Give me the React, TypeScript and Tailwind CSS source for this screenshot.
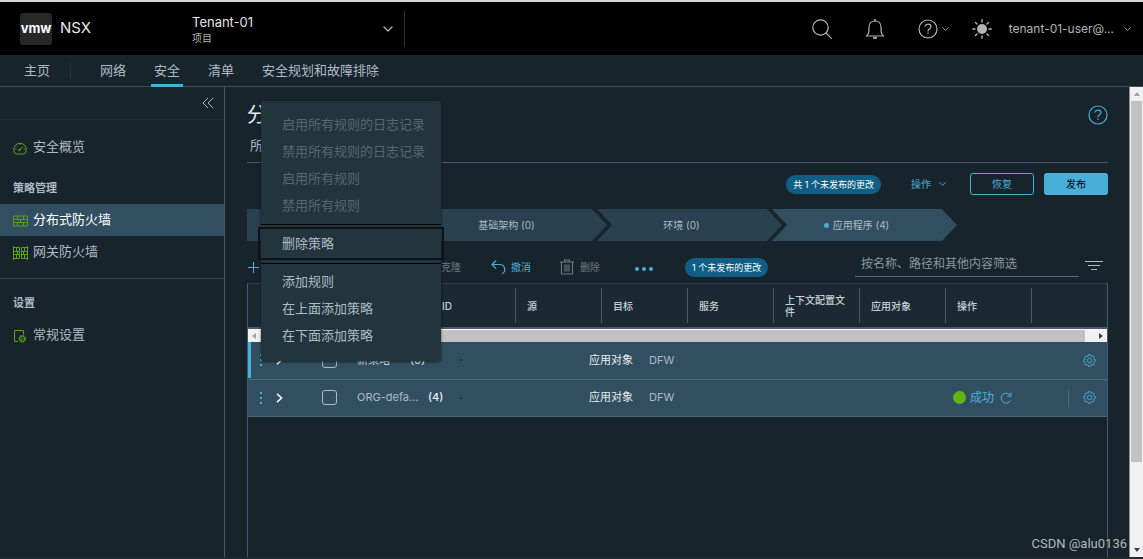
import type { ReactNode } from "react";
import clsx from "clsx";

function ChevronDown({ className }: { className?: string }) {
  return (
    <svg viewBox="0 0 10 6" fill="none" stroke="currentColor" className={className} aria-hidden="true">
      <path d="M1 1l4 4 4-4" strokeWidth="1.3" strokeLinecap="round" strokeLinejoin="round" />
    </svg>
  );
}

function HelpIcon({ className }: { className?: string }) {
  return (
    <svg viewBox="0 0 20 20" fill="none" stroke="currentColor" className={className} aria-hidden="true">
      <circle cx="10" cy="10" r="9" strokeWidth="1.2" />
      <path d="M7 7.2C7.4 5.8 8.6 5.1 10 5.1c1.7 0 3 1 3 2.500 0 2.200-3 2.100-3 4.400" strokeWidth="1.2" strokeLinecap="round" />
      <circle cx="10" cy="14.3" r="0.8" fill="currentColor" stroke="none" />
    </svg>
  );
}

function SearchIcon() {
  return (
    <svg viewBox="0 0 20 20" fill="none" stroke="currentColor" strokeWidth="1.2" className="size-5" aria-hidden="true">
      <circle cx="8.5" cy="8.5" r="7.7" />
      <path d="M14 14l5.400 5.400" strokeLinecap="round" />
    </svg>
  );
}

function BellIcon() {
  return (
    <svg viewBox="0 0 20 20" fill="none" stroke="currentColor" strokeWidth="1.2" className="size-5" aria-hidden="true">
      <path
        d="M1.500 17h17c-1.600-1.400-2.400-2.600-2.400-4.400V8.400C16.100 4.500 13.500 2 10 2S3.900 4.500 3.900 8.400v4.200c0 1.800-.8 3-2.400 4.400z"
        strokeLinejoin="round"
      />
      <path d="M10 .5V2M8.700 18.900h2.600" strokeWidth="1.600" strokeLinecap="round" />
    </svg>
  );
}

function SunIcon() {
  return (
    <svg viewBox="0 0 20 20" stroke="currentColor" strokeWidth="1.4" strokeLinecap="round" className="size-5" aria-hidden="true">
      <circle cx="10" cy="10" r="5" fill="currentColor" stroke="none" />
      <path d="M10 .8v2.200M10 17v2.200M.8 10H3M17 10h2.200M3.500 3.500L5 5M15 15l1.500 1.500M16.500 3.500L15 5M5 15l-1.500 1.500" />
    </svg>
  );
}

function GaugeIcon() {
  return (
    <svg viewBox="0 0 14 14" fill="none" stroke="currentColor" className="size-3.5" aria-hidden="true">
      <path d="M2.600 13A6.300 6.300 0 1 1 11.400 13z" strokeLinejoin="round" />
      <path d="M6.800 8.800L9.800 5.500M7 2.500v1.500M2 8h1.500M10.500 8H12M3.700 4.600l.8.8" />
      <circle cx="6.500" cy="9" r=".8" />
    </svg>
  );
}

function WallIcon() {
  return (
    <svg viewBox="0 0 16 12" fill="none" stroke="currentColor" strokeWidth=".9" className="h-3 w-4" aria-hidden="true">
      <path d="M.5 1h14v10H.5zM.5 4.500h14M.5 7.500h14M4.500 1v3.500M10.500 1v3.500M7.500 4.500v3M4.500 7.500V11M10.500 7.500V11" />
    </svg>
  );
}

function GatewayWallIcon() {
  return (
    <svg viewBox="0 0 16 14" fill="none" stroke="currentColor" className="h-3.5 w-4" aria-hidden="true">
      <path d="M.5 0v14M14.500 0v14M.5 1.500h6v11h-6M14.500 1.500h-6v11h6M.5 5.500h6M.5 8.500h6M8.500 5.500h6M8.500 8.500h6M3.500 1.500v4M4.500 5.500v3M3.500 8.500v4M11.500 1.500v4M10.500 5.500v3M11.500 8.500v4" />
    </svg>
  );
}

function DocGearIcon() {
  return (
    <svg viewBox="0 0 14 14" fill="none" stroke="currentColor" className="size-3.5" aria-hidden="true">
      <path d="M5 12.500H1.500V1.500h9v4" />
      <circle cx="9.300" cy="9.800" r="3" strokeWidth="1.600" strokeDasharray="1.500 .85" />
      <circle cx="9.300" cy="9.800" r="2.600" strokeWidth=".7" />
      <circle cx="9.300" cy="9.800" r=".9" strokeWidth=".7" />
    </svg>
  );
}

function GearIcon() {
  return (
    <svg viewBox="0 0 18 19" fill="none" stroke="currentColor" strokeWidth="1.300" className="size-[13px]" aria-hidden="true">
      <path
        d="M7.600 1h2.800l.5 2 1.300.6 1.900-1.100 2 2-1.100 1.900.5 1.300 2 .5v2.600l-2 .5-.5 1.300 1.100 1.900-2 2-1.900-1.100-1.300.6-.5 2H7.600l-.5-2-1.300-.6-1.900 1.100-2-2L3 12.600l-.5-1.300-2-.5V8.200l2-.5L3 6.400 1.900 4.500l2-2 1.900 1.100L7.100 3z"
        strokeLinejoin="round"
      />
      <circle cx="9" cy="9.500" r="3.200" />
    </svg>
  );
}

function UndoIcon() {
  return (
    <svg viewBox="0 0 15 15" fill="none" stroke="currentColor" strokeWidth="1.200" className="size-[15px]" aria-hidden="true">
      <path d="M4.800.8L1 4.500l3.800 3.800M1 4.500h7.500a5 5 0 0 1 2.800 9.300" strokeLinecap="round" strokeLinejoin="round" />
    </svg>
  );
}

function TrashIcon() {
  return (
    <svg viewBox="0 0 14 16" fill="none" stroke="currentColor" className="h-4 w-3.5" aria-hidden="true">
      <path d="M0 3h14M4.500 3V1h5v2M1.500 3v12h11V3M5 5.500v7M7 5.500v7M9 5.500v7" strokeWidth="1.100" />
    </svg>
  );
}

const navItems = ["网络", "安全", "清单", "安全规划和故障排除"];

const stages = ["基础架构 (0)", "环境 (0)", "应用程序 (4)"];

const columns = ["源", "目标", "服务", "上下文配置文件", "应用对象", "操作"];

const policies = [
  { name: "新策略", count: 0, changed: true, status: "" },
  { name: "ORG-defa...", count: 4, changed: false, status: "成功" },
];

function TopBar() {
  return (
    <header className="flex h-[55px] shrink-0 items-center border-t-2 border-[#d4d6d7] bg-black pr-3 text-[#b3b3b3]">
      <a href="#" className="flex w-[172px] items-center gap-2 pl-5 text-[#e8e8e8]">
        <span className="flex size-8 items-center justify-center rounded-[3px] bg-[#282828] text-[13px] font-bold text-white">
          vmw
        </span>
        <span className="text-[15px]">NSX</span>
      </a>
      <button className="flex h-9 w-[233px] items-center justify-between border-r border-[#303030] pr-[11px] pl-5 text-left">
        <span className="flex flex-col pt-0.5">
          <span className="text-[13px] leading-4 text-[#e4e4e4]">Tenant-01</span>
          <span className="text-[10px] leading-4">项目</span>
        </span>
        <ChevronDown className="h-1.5 w-2.5" />
      </button>
      <div className="ml-auto flex items-center">
        <button aria-label="Search" className="mr-[33px]">
          <SearchIcon />
        </button>
        <button aria-label="Notifications" className="mr-[33px]">
          <BellIcon />
        </button>
        <button aria-label="Help" className="mr-[23px] flex items-center gap-1">
          <HelpIcon className="size-5" />
          <ChevronDown className="h-1.5 w-[7px]" />
        </button>
        <button aria-label="Theme" className="mr-[17px]">
          <SunIcon />
        </button>
        <button className="flex items-center gap-2.5 text-[12px]">
          tenant-01-user@...
          <ChevronDown className="h-1.5 w-[7px]" />
        </button>
      </div>
    </header>
  );
}

function MainNav() {
  return (
    <nav className="flex h-8 shrink-0 items-center border-b border-[#414f58] text-[13px] text-[#adbbc4]">
      <a href="#" className="pr-5 pl-6">
        主页
      </a>
      <span className="mr-[26px] h-4 w-px bg-[#22343c]" />
      <div className="flex h-full gap-[22px]">
        {navItems.map((item) => (
          <a
            key={item}
            href="#"
            className={clsx(
              "flex h-8 items-center border-b-[3px] px-[3px] pt-[3px]",
              item === "安全" ? "border-[#49afd9]" : "border-transparent",
            )}
          >
            {item}
          </a>
        ))}
      </div>
    </nav>
  );
}

function SideLink({ icon, label, active }: { icon: ReactNode; label: string; active?: boolean }) {
  return (
    <a
      href="#"
      className={clsx(
        "flex h-8 items-center pl-[13px] text-[13px]",
        active ? "bg-[#324f62] text-white" : "text-[#adbbc4]",
      )}
    >
      <span className="flex w-5 pt-0.5 text-[#5aa220]">{icon}</span>
      {label}
    </a>
  );
}

function Sidebar() {
  return (
    <aside className="w-[225px] shrink-0 border-r border-[#485969]">
      <div className="flex h-[33px] items-center justify-end border-b border-[#1f2e36] pr-2.5">
        <button aria-label="Collapse" className="text-[#adbbc4]">
          <svg viewBox="0 0 12 12" fill="none" stroke="currentColor" className="size-3" aria-hidden="true">
            <path d="M6 1L1 6l5 5M11 1L6 6l5 5" />
          </svg>
        </button>
      </div>
      <div className="pt-[11px]">
        <SideLink icon={<GaugeIcon />} label="安全概览" />
        <h2 className="mt-[9px] flex h-8 items-center pl-[13px] text-[11px] font-bold text-[#adbbc4]">策略管理</h2>
        <SideLink icon={<WallIcon />} label="分布式防火墙" active />
        <SideLink icon={<GatewayWallIcon />} label="网关防火墙" />
      </div>
      <div className="mt-2.5 border-t border-[#30424c] pt-2">
        <h2 className="flex h-8 items-center pl-[13px] text-[11px] font-bold text-[#adbbc4]">设置</h2>
        <SideLink icon={<DocGearIcon />} label="常规设置" />
      </div>
    </aside>
  );
}

function Badge({ children }: { children: ReactNode }) {
  return <span className="rounded-full bg-[#0f5e83] px-[7px] text-[9px] leading-[19px] text-white">{children}</span>;
}

function ActionBar() {
  return (
    <div className="mt-2.5 flex h-[22px] items-center justify-end text-[10px]">
      <Badge>共 1 个未发布的更改</Badge>
      <button className="mr-6 ml-[30px] flex items-center gap-2 text-[#49afd9]">
        操作
        <ChevronDown className="h-1.5 w-[7px]" />
      </button>
      <button className="h-[22px] w-16 rounded-[3px] border border-[#49afd9] text-[#49afd9]">恢复</button>
      <button className="ml-2.5 h-[22px] w-16 rounded-[3px] bg-[#49afd9] text-black">发布</button>
    </div>
  );
}

function Stages() {
  return (
    <div className="mt-3.5 flex text-[10px] text-[#adbbc4]">
      <button
        aria-label="紧急情况"
        className="h-8 w-[185px] bg-[#29404e] [clip-path:polygon(0_0,calc(100%-15px)_0,100%_50%,calc(100%-15px)_100%,0_100%)]"
      />
      {stages.map((stage, i) => {
        const active = i === stages.length - 1;
        return (
          <button
            key={stage}
            className={clsx(
              "-ml-2.5 flex h-8 w-[185px] items-center justify-center gap-1 pr-4",
              "[clip-path:polygon(0_0,calc(100%-15px)_0,100%_50%,calc(100%-15px)_100%,0_100%,15px_50%)]",
              active ? "bg-[#324f62]" : "bg-[#29404e]",
            )}
          >
            {active && <span className="size-[5px] rounded-full bg-[#49afd9]" />}
            {stage}
          </button>
        );
      })}
    </div>
  );
}

function Toolbar() {
  return (
    <div className="mt-2.5 flex h-8 items-center text-[10px] text-[#6b7980]">
      <button aria-label="添加" className="w-[194px] text-[#49afd9]">
        <svg viewBox="0 0 12 12" stroke="currentColor" className="size-3" aria-hidden="true">
          <path d="M6.500 1v11M1 6.500h11" />
        </svg>
      </button>
      <button disabled>克隆</button>
      <button className="ml-[30px] flex items-center gap-[5px] text-[#49afd9]">
        <UndoIcon />
        撤消
      </button>
      <button disabled className="ml-[29px] flex items-center gap-1.5">
        <TrashIcon />
        删除
      </button>
      <button aria-label="More" className="mr-8 ml-[35px] flex gap-[3px] pt-1 text-[#49afd9]">
        <span className="size-1 rounded-full bg-current" />
        <span className="size-1 rounded-full bg-current" />
        <span className="size-1 rounded-full bg-current" />
      </button>
      <Badge>1 个未发布的更改</Badge>
      <input
        aria-label="按名称、路径和其他内容筛选"
        placeholder="按名称、路径和其他内容筛选"
        className="mb-1.5 ml-auto h-[25px] w-56 border-b border-[#5b6b75] bg-transparent px-1.5 text-[12px] outline-none placeholder:text-[#8b979e]"
      />
      <button aria-label="Filter" className="mr-[5px] mb-1 ml-1.5 text-[#adbbc4]">
        <svg viewBox="0 0 18 10" stroke="currentColor" className="h-2.5 w-[18px]" aria-hidden="true">
          <path d="M0 1.500h18M3 5.500h12M6 9.500h6" />
        </svg>
      </button>
    </div>
  );
}

function PolicyTable() {
  return (
    <div className="flex-1 border-x border-t border-x-[#485969] border-t-[#2f404a]">
      <table className="w-full table-fixed border-collapse text-left">
        <thead>
          <tr className="h-11 border-b-2 border-[#485969] bg-[#1b2a32] text-[10px] leading-3 text-[#c5d0d6]">
            <th aria-label="名称" className="w-[182px]" />
            <th className="w-[86px] p-0 pl-3 font-medium">
              <div className="flex h-[35px] items-center border-r border-[#485969]">ID</div>
            </th>
            {columns.map((column) => (
              <th key={column} className="w-[86px] p-0 pl-[11px] font-medium">
                <div className="flex h-[35px] items-center border-r border-[#485969] pr-2">{column}</div>
              </th>
            ))}
            <th aria-label="设置" />
          </tr>
        </thead>
        <tbody>
          <tr>
            <td colSpan={9} className="p-0">
              <div className="flex h-[13px] items-center justify-between border-t border-white bg-[#c1c1c1]">
                <span className="flex h-3 w-[22px] items-center bg-[#f1f1f1] pl-1">
                  <span className="border-y-[3px] border-r-4 border-y-transparent border-r-[#a3a3a3]" />
                </span>
                <span className="flex h-3 w-[22px] items-center justify-end bg-[#f1f1f1] pr-1">
                  <span className="border-y-[3px] border-l-4 border-y-transparent border-l-[#404040]" />
                </span>
              </div>
            </td>
          </tr>
          {policies.map((policy) => (
            <tr key={policy.name} className="h-[37px] border-b border-[#4f6878] bg-[#324f62] text-[11px] text-[#adbbc4]">
              <td colSpan={2} className="p-0">
                <div
                  className={clsx(
                    "flex h-9 items-center border-l-[3px] pl-[9px]",
                    policy.changed ? "border-[#49afd9]" : "border-transparent",
                  )}
                >
                  <button aria-label="菜单" className="flex flex-col gap-[3px] text-[#49afd9]">
                    <span className="size-0.5 bg-current" />
                    <span className="size-0.5 bg-current" />
                    <span className="size-0.5 bg-current" />
                  </button>
                  <button aria-label="展开" className="ml-3.5 w-[46px] text-white">
                    <svg viewBox="0 0 8 12" fill="none" stroke="currentColor" strokeWidth="1.800" className="h-2.5 w-[7px]" aria-hidden="true">
                      <path d="M1 1l5.500 5L1 11" />
                    </svg>
                  </button>
                  <input
                    type="checkbox"
                    aria-label={policy.name}
                    className="size-[15px] appearance-none rounded-[3px] border border-[#adbbc4]"
                  />
                  <span className={clsx("ml-5", policy.changed ? "w-[53px] text-[#e0e6ea]" : "w-[71px]")}>{policy.name}</span>
                  <span className="font-medium text-[#e9eef1]">({policy.count})</span>
                  <span className="mr-[54px] ml-auto size-0.5 bg-[#203540]" />
                </div>
              </td>
              <td colSpan={5} className="p-0 pl-[73px]">
                <span className="text-[#e9eef1]">应用对象</span>
                <span className="ml-4">DFW</span>
              </td>
              <td colSpan={2} className="p-0 pr-[11px]">
                <div className="flex items-center justify-end text-[#49afd9]">
                  {policy.status && (
                    <>
                      <span className="mr-1 size-[13px] rounded-full bg-[#60b515]" />
                      <span className="mr-1.5 text-[12px] leading-4">{policy.status}</span>
                      <button aria-label="刷新" className="mr-14">
                        <svg viewBox="0 0 12 12" fill="none" stroke="currentColor" className="size-3" aria-hidden="true">
                          <path d="M10.500 8.500A5 5 0 1 1 10.500 3.800M11 .5v3.700H7.300" />
                        </svg>
                      </button>
                      <span className="mr-3.5 h-4.5 w-px bg-[#4f6878]" />
                    </>
                  )}
                  <button aria-label="设置">
                    <GearIcon />
                  </button>
                </div>
              </td>
            </tr>
          ))}
        </tbody>
      </table>
    </div>
  );
}

function MenuItem({ children, disabled, focused }: { children: ReactNode; disabled?: boolean; focused?: boolean }) {
  return (
    <button
      role="menuitem"
      disabled={disabled}
      className={clsx(
        "flex h-[27px] w-full items-center pl-[21px] text-[#adbbc4] disabled:text-[#566770]",
        focused && "outline-2 outline-offset-1 outline-[#0e1214]",
      )}
    >
      {children}
    </button>
  );
}

function PolicyMenu() {
  return (
    <div
      role="menu"
      className="absolute top-3.5 left-9 z-10 w-45 rounded-[3px] bg-[#22343c] pt-2.5 pb-3 text-[13px] shadow-[0_1px_3px_rgba(0,0,0,0.6)]"
    >
      <MenuItem disabled>启用所有规则的日志记录</MenuItem>
      <MenuItem disabled>禁用所有规则的日志记录</MenuItem>
      <MenuItem disabled>启用所有规则</MenuItem>
      <MenuItem disabled>禁用所有规则</MenuItem>
      <hr className="my-[5px] border-black" />
      <MenuItem focused>删除策略</MenuItem>
      <hr className="mt-1.5 mb-1 border-black" />
      <MenuItem>添加规则</MenuItem>
      <MenuItem>在上面添加策略</MenuItem>
      <MenuItem>在下面添加策略</MenuItem>
    </div>
  );
}

function PageScrollbar() {
  return (
    <div className="flex w-3.5 shrink-0 flex-col items-center border-l border-[#8a9094] bg-[#f1f1f1]">
      <span className="flex h-3.5 items-center">
        <span className="border-x-[3px] border-b-4 border-x-transparent border-b-[#a3a3a3]" />
      </span>
      <span className="w-[11px] flex-[361] bg-[#c1c1c1]" />
      <span className="flex-[81]" />
      <span className="flex h-3.5 items-center">
        <span className="border-x-[3px] border-t-4 border-x-transparent border-t-[#404040]" />
      </span>
    </div>
  );
}

export default function App() {
  return (
    <div className="relative flex min-h-screen flex-col border-b-2 border-[#25292b] bg-[#17242b] font-['Inter','Noto_Sans_CJK_SC',sans-serif]">
      <TopBar />
      <MainNav />
      <div className="flex flex-1">
        <Sidebar />
        <main className="relative flex min-w-0 flex-1 flex-col pr-[21px] pl-[22px]">
          <div className="mt-3 flex h-[31px] items-center justify-between">
            <h1 aria-label="分布式防火墙" className="text-[20px] text-[#e9eef1]">
              分
            </h1>
            <button aria-label="Help" className="text-[#49afd9]">
              <HelpIcon className="size-5" />
            </button>
          </div>
          <div className="flex h-[33px] items-center border-b border-[#485969] pl-[3px] text-[13px] text-[#adbbc4]">
            <a href="#">所</a>
          </div>
          <ActionBar />
          <Stages />
          <Toolbar />
          <PolicyTable />
          <PolicyMenu />
        </main>
        <PageScrollbar />
      </div>
      <span className="absolute right-4 bottom-1 z-20 font-['Roboto',sans-serif] text-[13px] text-[#b4b8ba]">CSDN @alu0136</span>
    </div>
  );
}
